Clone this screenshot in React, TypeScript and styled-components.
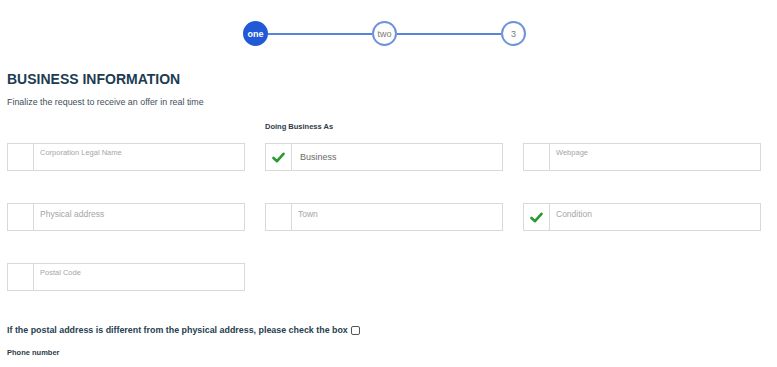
import { FC } from "react";
import styled, { createGlobalStyle } from "styled-components";

const GlobalStyle = createGlobalStyle`
  body {
    margin: 0;
    background: #ffffff;
    font-family: "Liberation Sans", Arial, sans-serif;
  }
`;

interface Field {
  placeholder: string;
  value?: string;
  checked?: boolean;
  small?: boolean;
}

const fields: Field[] = [
  { placeholder: "Corporation Legal Name", small: true },
  { placeholder: "Business", value: "Business", checked: true },
  { placeholder: "Webpage", small: true },
  { placeholder: "Physical address" },
  { placeholder: "Town" },
  { placeholder: "Condition", checked: true },
  { placeholder: "Postal Code", small: true },
];

const Check: FC = () => (
  <svg width="13" height="11" viewBox="0 0 13 11">
    <path
      d="M1.5 6 L5 9.2 L11.5 1.8"
      fill="none"
      stroke="#2a9a2f"
      strokeWidth="2.6"
      strokeLinecap="round"
      strokeLinejoin="round"
    />
  </svg>
);

const InputBox: FC<Field> = ({ placeholder, value, checked, small }) => (
  <Box>
    <IconCell>{checked && <Check />}</IconCell>
    {value ? (
      <Value>{value}</Value>
    ) : (
      <Placeholder $small={small}>{placeholder}</Placeholder>
    )}
  </Box>
);

const App: FC = () => {
  return (
    <>
      <GlobalStyle />
      <Page>
        <Stepper>
          <Step $active>one</Step>
          <Line />
          <Step>two</Step>
          <Line />
          <Step>3</Step>
        </Stepper>
        <Title>BUSINESS INFORMATION</Title>
        <Subtitle>Finalize the request to receive an offer in real time</Subtitle>
        <LabelRow>
          <FieldLabel $column={2}>Doing Business As</FieldLabel>
        </LabelRow>
        <Grid>
          {fields.map((f) => (
            <InputBox key={f.placeholder} {...f} />
          ))}
        </Grid>
        <CheckLine>
          If the postal address is different from the physical address, please check the box
          <SmallBox />
        </CheckLine>
        <PhoneLabel>Phone number</PhoneLabel>
      </Page>
    </>
  );
};

export default App;

const Page = styled.div`
  padding: 21px 16px 0 7px;
`;

const Stepper = styled.div`
  display: flex;
  align-items: center;
  margin-left: 236px;
`;

const Step = styled.div<{ $active?: boolean }>`
  width: 25px;
  height: 25px;
  box-sizing: border-box;
  border-radius: 50%;
  display: flex;
  align-items: center;
  justify-content: center;
  font-size: 9px;
  font-weight: ${({ $active }) => ($active ? 700 : 400)};
  color: ${({ $active }) => ($active ? "#ffffff" : "#7a7a7a")};
  background: ${({ $active }) => ($active ? "#2159d6" : "#ffffff")};
  border: 2px solid ${({ $active }) => ($active ? "#2159d6" : "#6f92dc")};
`;

const Line = styled.div`
  width: 104px;
  height: 2px;
  background: #5a83d9;
`;

const Title = styled.h1`
  margin: 25px 0 0;
  font-size: 14px;
  line-height: 17px;
  font-weight: 700;
  color: #1d3c52;
`;

const Subtitle = styled.p`
  margin: 9px 0 0;
  font-size: 8.9px;
  line-height: 11px;
  color: #3f4f5b;
`;

const LabelRow = styled.div`
  display: grid;
  grid-template-columns: repeat(3, 238px);
  column-gap: 20px;
  margin-top: 14px;
`;

const FieldLabel = styled.div<{ $column: number }>`
  grid-column: ${({ $column }) => $column};
  font-size: 7.5px;
  line-height: 10px;
  font-weight: 700;
  color: #2c3b47;
`;

const Grid = styled.div`
  display: grid;
  grid-template-columns: repeat(3, 238px);
  column-gap: 20px;
  row-gap: 32px;
  margin-top: 11px;
`;

const Box = styled.div`
  display: flex;
  height: 28px;
  box-sizing: border-box;
  border: 1px solid #d9d9d9;
`;

const IconCell = styled.div`
  width: 25px;
  flex: none;
  border-right: 1px solid #d9d9d9;
  display: flex;
  align-items: center;
  justify-content: center;
`;

const Placeholder = styled.span<{ $small?: boolean }>`
  padding: ${({ $small }) => ($small ? "4px 0 0 6px" : "5px 0 0 6px")};
  font-size: ${({ $small }) => ($small ? "7.5px" : "8.5px")};
  color: #a6a6a6;
`;

const Value = styled.span`
  align-self: center;
  padding-left: 8px;
  font-size: 9px;
  color: #6a6a6a;
`;

const CheckLine = styled.div`
  margin-top: 33px;
  display: flex;
  align-items: center;
  gap: 3px;
  font-size: 8.9px;
  line-height: 12px;
  font-weight: 700;
  color: #27404f;
`;

const SmallBox = styled.span`
  width: 7px;
  height: 7px;
  border: 1px solid #555;
  border-radius: 2px;
`;

const PhoneLabel = styled.div`
  margin-top: 12px;
  font-size: 7.5px;
  line-height: 10px;
  font-weight: 700;
  color: #2c3b47;
`;
